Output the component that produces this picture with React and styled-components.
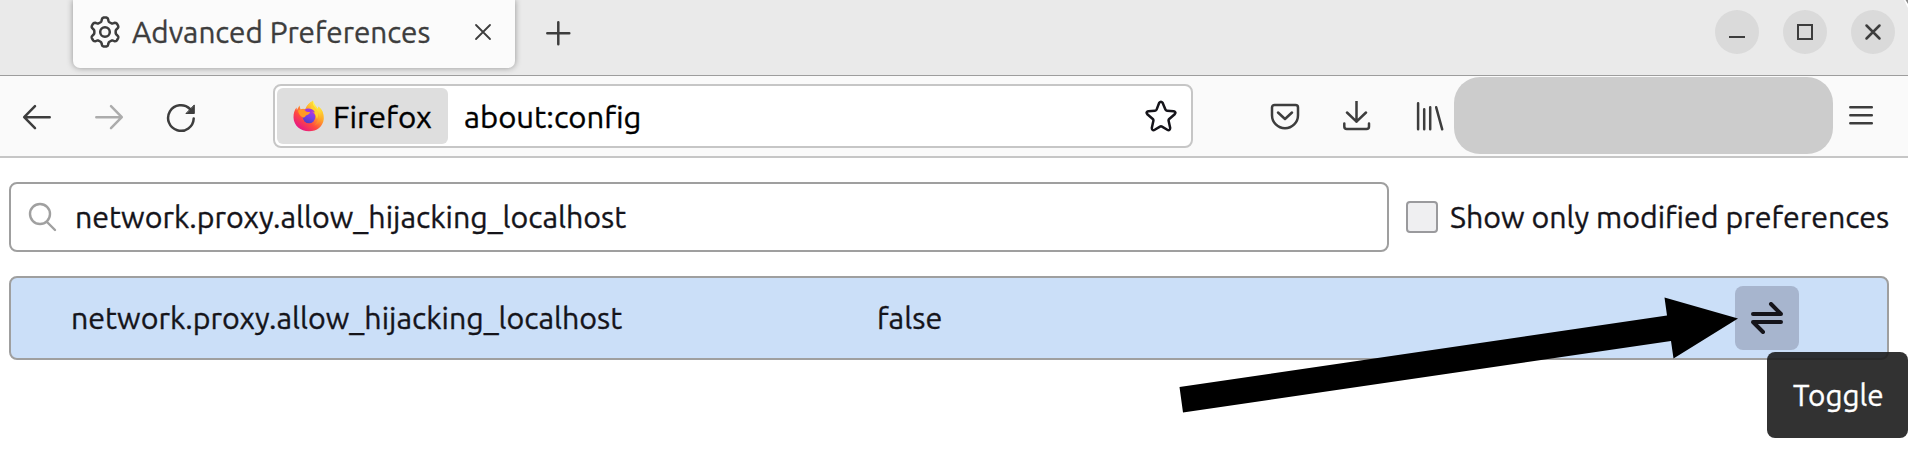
import React from 'react';
import styled, { createGlobalStyle } from 'styled-components';

const Global = createGlobalStyle`
  *{box-sizing:border-box}
  body{margin:0;background:#fff;overflow:hidden}
`;

const Window = styled.div`
  position:relative;width:1908px;height:451px;overflow:hidden;
  font-family:Ubuntu,"Noto Sans","Open Sans",sans-serif;font-size:30px;color:#15141a;
`;
const Label = styled.span`
  display:block;flex:none;white-space:nowrap;box-sizing:content-box;
  width:${p => p.$w}px;color:${p => p.$color || '#15141a'};
  margin-left:${p => p.$ml || 0}px;padding-top:${p => p.$drop || 0}px;
  line-height:40px;
`;
const Squeeze = styled.span`
  display:inline-block;transform-origin:0 50%;line-height:40px;
  -webkit-text-stroke:.35px currentColor;
`;
/* Fits a text run to a fixed advance width, anchored at its start. */
const Run = ({ w, ml, drop, children, color }) => {
  const ref = React.useRef(null);
  React.useLayoutEffect(() => {
    const el = ref.current;
    el.style.transform = `scaleX(${w / el.offsetWidth})`;
  }, [w]);
  return <Label $w={w} $ml={ml} $drop={drop} $color={color}><Squeeze ref={ref}>{children}</Squeeze></Label>;
};
const TabBar = styled.header`
  display:flex;align-items:flex-start;height:76px;padding-left:73px;
  background:#eaeaea;border-bottom:1px solid #9d9d9d;
`;
const Tab = styled.div`
  display:flex;align-items:center;width:442px;height:68px;padding:0 20px 4px 16px;
  background:#fbfbfb;border-radius:0 0 7px 7px;box-shadow:0 0 6px rgba(0,0,0,.38);
`;
const Icon = styled.svg`
  display:block;flex:none;width:${p => p.$s || 32}px;height:${p => p.$s || 32}px;
  margin-left:${p => p.$ml || 0}px;
  fill:none;stroke:${p => p.$c || '#3d3d3d'};stroke-width:${p => p.$sw || 2.5};
  stroke-linecap:${p => p.$cap || 'round'};stroke-linejoin:${p => p.$join || 'round'};
`;
const NewTab = styled.div`margin:17px 0 0 27px;`;
const WindowControls = styled.div`display:flex;gap:24px;margin:10px 13px 0 auto;`;
const ControlButton = styled.div`
  width:44px;height:44px;border-radius:50%;background:#dadada;
`;
const Corner = styled.svg`position:absolute;right:0;top:0;width:5px;height:9px;`;
const Toolbar = styled.nav`
  display:flex;align-items:center;height:82px;background:#fafafa;
  border-bottom:2px solid #c6c6c6;
  & > svg{margin-top:2px}
`;
const UrlBar = styled.div`
  display:flex;align-items:center;width:920px;height:64px;margin-left:76px;padding:0 13px 0 2px;
  border:2px solid #c6c6c6;border-radius:8px;background:#fff;
`;
const Identity = styled.div`
  display:flex;align-items:center;width:171px;height:56px;padding-left:16px;margin-right:16px;
  border-radius:6px;background:#dedede;
`;
const Extensions = styled.div`
  align-self:flex-start;width:379px;height:77px;margin:1px 0 0 9px;border-radius:26px;background:#ccc;
`;
const Page = styled.main`padding:24px 19px 0 9px;`;
const SearchRow = styled.div`display:flex;align-items:center;height:70px;`;
const SearchBox = styled.div`
  display:flex;align-items:center;width:1380px;height:70px;padding-left:17px;
  border:2px solid #9f9f9f;border-radius:8px;background:#fff;
`;
const Checkbox = styled.div`
  width:32px;height:32px;margin:0 12px 0 17px;border:2px solid #9a9a9d;border-radius:4px;background:#efeff1;
`;
const PrefRow = styled.div`
  display:flex;align-items:center;height:84px;margin-top:24px;padding-left:60px;
  border:2px solid #9f9f9f;border-radius:8px;background:#cbdff8;
`;
const Name = styled.div`width:806px;`;
const ToggleButton = styled.div`
  display:flex;align-items:center;justify-content:center;width:64px;height:64px;
  margin-left:auto;margin-right:88px;border-radius:8px;background:#a7b5ce;
`;
const Arrow = styled.svg`position:absolute;left:1170px;top:290px;width:580px;height:130px;`;
const Tooltip = styled.div`
  position:absolute;left:1767px;top:352px;width:141px;height:86px;padding:23px 0 0 26px;
  border-radius:8px;background:rgba(28,28,28,.9);
`;

const FirefoxLogo = () => (
  <Icon viewBox="0 0 32 32">
    <defs>
      <linearGradient id="flame" x1=".85" y1=".1" x2=".2" y2=".95">
        <stop offset="0" stopColor="#fff44f" /><stop offset=".35" stopColor="#ffa52a" />
        <stop offset=".65" stopColor="#ff4a3f" /><stop offset="1" stopColor="#e5128b" />
      </linearGradient>
      <linearGradient id="globe" x1=".7" y1="0" x2=".3" y2="1">
        <stop offset="0" stopColor="#b833e1" /><stop offset=".5" stopColor="#7542e5" /><stop offset="1" stopColor="#4b3fc0" />
      </linearGradient>
      <linearGradient id="edge" x1=".4" y1="0" x2=".7" y2="1">
        <stop offset="0" stopColor="#fff44f" /><stop offset=".5" stopColor="#ffd532" /><stop offset="1" stopColor="#ff8a16" stopOpacity="0" />
      </linearGradient>
    </defs>
    <g stroke="none">
      <path fill="url(#flame)" d="M20 .5c-1 3 .2 5 2.500 6.500 1 .6 1.800 1.200 2.400 2l.4-2.200c3.700 3 6 7.200 5.500 12.200C30 26.500 24 31.300 16 31.300 7.500 31.300.8 25.500.5 17.500.4 13.500 1.500 10 3.500 7.500L3.900 10 6.500 5.500l1 4c1.500-.7 3-.8 4.500-.4C13.500 5.200 16 2.200 20 .5z" />
      <path fill="#dedede" d="M12.300 8.700C13.800 5.200 16 2.200 20 .5L17.500 0H9l-.5 8z" />
      <path fill="#ffd12e" d="M11.500 10.500c2.500-2 5-2.800 7-2.500-.8-2.500-.3-5.500 1.500-7.500-.5 3.500 1.500 5 3.500 7.500 2 2.500 2.500 7 .5 11l-3-8z" />
      <path fill="url(#edge)" d="M20 .5c-1.500 5 3 7.500 5 11 2.500 5 0 11-4 14 7-1.500 10.500-8 8.700-13.500-.9-2.500-2.500-4-4.400-5.400L24.900 9C23.500 6 21 4.500 20 .5z" />
      <circle cx="16" cy="17" r="6.300" fill="url(#globe)" />
      <path fill="#ff9a22" d="M5 10.500c3-2 6-1 7.500 1l4.500.4c.2 1.700-1.700 2.400-3.500 3.300-1.500.8-1 2.300-3.500 2.300-2.500-1-4.500-3.500-5-7z" />
      <path fill="#a035dd" d="M11.500 10c3-2.300 8.500-2 10.500 2.500-1.500-1-2.500-1-4-.5-2.500-.1-4.500 0-6.500-2z" />
    </g>
  </Icon>
);

const cog = () => {
  const pts = [];
  for (let i = 0; i < 144; i++) {
    const a = (i / 144) * Math.PI * 2;
    const r = 12.6 + 2 * Math.tanh(2 * Math.cos(6 * a));
    pts.push(`${(16 + r * Math.sin(a)).toFixed(2)} ${(16 - r * Math.cos(a)).toFixed(2)}`);
  }
  return `M${pts.join('L')}Z`;
};

export default function App() {
  return (
    <Window>
      <Global />
      <TabBar>
        <Tab>
          <Icon viewBox="0 0 32 32"><path d={cog()} /><circle cx="16" cy="16" r="4.800" /></Icon>
          <Run w={298} ml={11} color="#3d3d3d">Advanced Preferences</Run>
          <Icon $s={24} $sw={1.8} $ml={41} viewBox="0 0 24 24"><path d="M5 5l14 14M19 5L5 19" /></Icon>
        </Tab>
        <NewTab><Icon viewBox="0 0 32 32"><path d="M5.300 16.300h22M16.300 5.300v22" /></Icon></NewTab>
        <WindowControls>
          <ControlButton><Icon $s={44} $sw={2} $cap="butt" viewBox="0 0 44 44"><path d="M14 27h16" /></Icon></ControlButton>
          <ControlButton><Icon $s={44} $sw={2} $join="miter" viewBox="0 0 44 44"><rect x="15" y="15" width="14" height="14" /></Icon></ControlButton>
          <ControlButton><Icon $s={44} $sw={2.5} viewBox="0 0 44 44"><path d="M15.500 15.500l13 13m0-13l-13 13" /></Icon></ControlButton>
        </WindowControls>
      </TabBar>
      <Corner viewBox="0 0 5 9"><path fill="#fff" d="M1 0h4v8z" /><path fill="#8a8a8a" d="M2.500 0H5v4z" /></Corner>
      <Toolbar>
        <Icon $ml={21} viewBox="0 0 32 32"><path d="M28.700 16.200H3.500M14 5.200L3.200 16.200 14 27.200" /></Icon>
        <Icon $ml={40} $c="#acacac" viewBox="0 0 32 32"><path d="M3.300 16.200h25.200M18 5.200l10.800 11L18 27.200" /></Icon>
        <Icon $ml={40} viewBox="0 0 32 32"><path d="M28.700 17.500A12.800 12.800 0 1 1 25 8" /><path fill="#3d3d3d" strokeWidth="1" d="M29.300 4.300V12.500h-8z" /></Icon>
        <UrlBar>
          <Identity><FirefoxLogo /><Run w={99} ml={8} drop={2} color="#000">Firefox</Run></Identity>
          <Run w={177} drop={2} color="#000">about:config</Run>
          <Icon $ml={504} $c="#15141a" viewBox="0 0 32 32"><path d="M14.200 2.800Q16 .5 17.600 2.800L20.400 9.600Q20.800 10.600 22 10.700L28.700 11.200Q31.500 12 29.700 14.200L24.200 19Q23.400 19.800 23.600 20.800L25.200 28Q25 31 22.300 29.800L17 26.600Q16 26 15 26.600L9.700 29.800Q7 31 6.800 28L8.400 20.800Q8.600 19.800 7.800 19L2.300 14.200Q.5 12 3.300 11.200L10 10.700Q11.200 10.600 11.600 9.600z" /></Icon>
        </UrlBar>
        <Icon $ml={76} viewBox="0 0 32 32"><path d="M5.500 4h21a2.500 2.500 0 0 1 2.500 2.500v7.700a13 13 0 0 1-26 0V6.500A2.500 2.500 0 0 1 5.500 4zM9 11.500l7 6.500 7-6.500" /></Icon>
        <Icon $ml={40} viewBox="0 0 32 32"><path d="M15.500 .3v20.500M6 11.500l9.500 9.200 9.500-9.200M3.300 22.500V25.500A2.500 2.500 0 0 0 5.800 28h19.700A2.500 2.500 0 0 0 28 25.500V22.500" /></Icon>
        <Icon $ml={40} viewBox="0 0 32 32"><path d="M5.100 2.300v26M11.200 8.300v20M17.200 6.300v22M23.200 6.300l6 22" /></Icon>
        <Extensions />
        <Icon $ml={12} viewBox="0 0 32 32"><path d="M5.300 6.200h21.500M5.300 14.200h21.500M5.300 22.200h21.500" /></Icon>
      </Toolbar>
      <Page>
        <SearchRow>
          <SearchBox>
            <Icon $c="#a0a0a0" $sw={2.4} viewBox="0 0 32 32"><circle cx="12" cy="13" r="10" /><path d="M19 21l8 8" /></Icon>
            <Run w={551} ml={15}>network.proxy.allow_hijacking_localhost</Run>
          </SearchBox>
          <Checkbox />
          <Run w={439}>Show only modified preferences</Run>
        </SearchRow>
        <PrefRow>
          <Name><Run w={551}>network.proxy.allow_hijacking_localhost</Run></Name>
          <Run w={65}>false</Run>
          <ToggleButton>
            <Icon $c="#15141a" $sw={4} viewBox="0 0 32 32"><path d="M2 12h28L20 2M30 20H2l10 10" /></Icon>
          </ToggleButton>
        </PrefRow>
      </Page>
      <Arrow viewBox="1170 290 580 130"><path d="M1179.500 387L1667 315.500 1664.500 297.500 1738 318.500 1673.500 358.500 1671 341 1183 412.500z" /></Arrow>
      <Tooltip><Run w={91} color="#fff">Toggle</Run></Tooltip>
    </Window>
  );
}
